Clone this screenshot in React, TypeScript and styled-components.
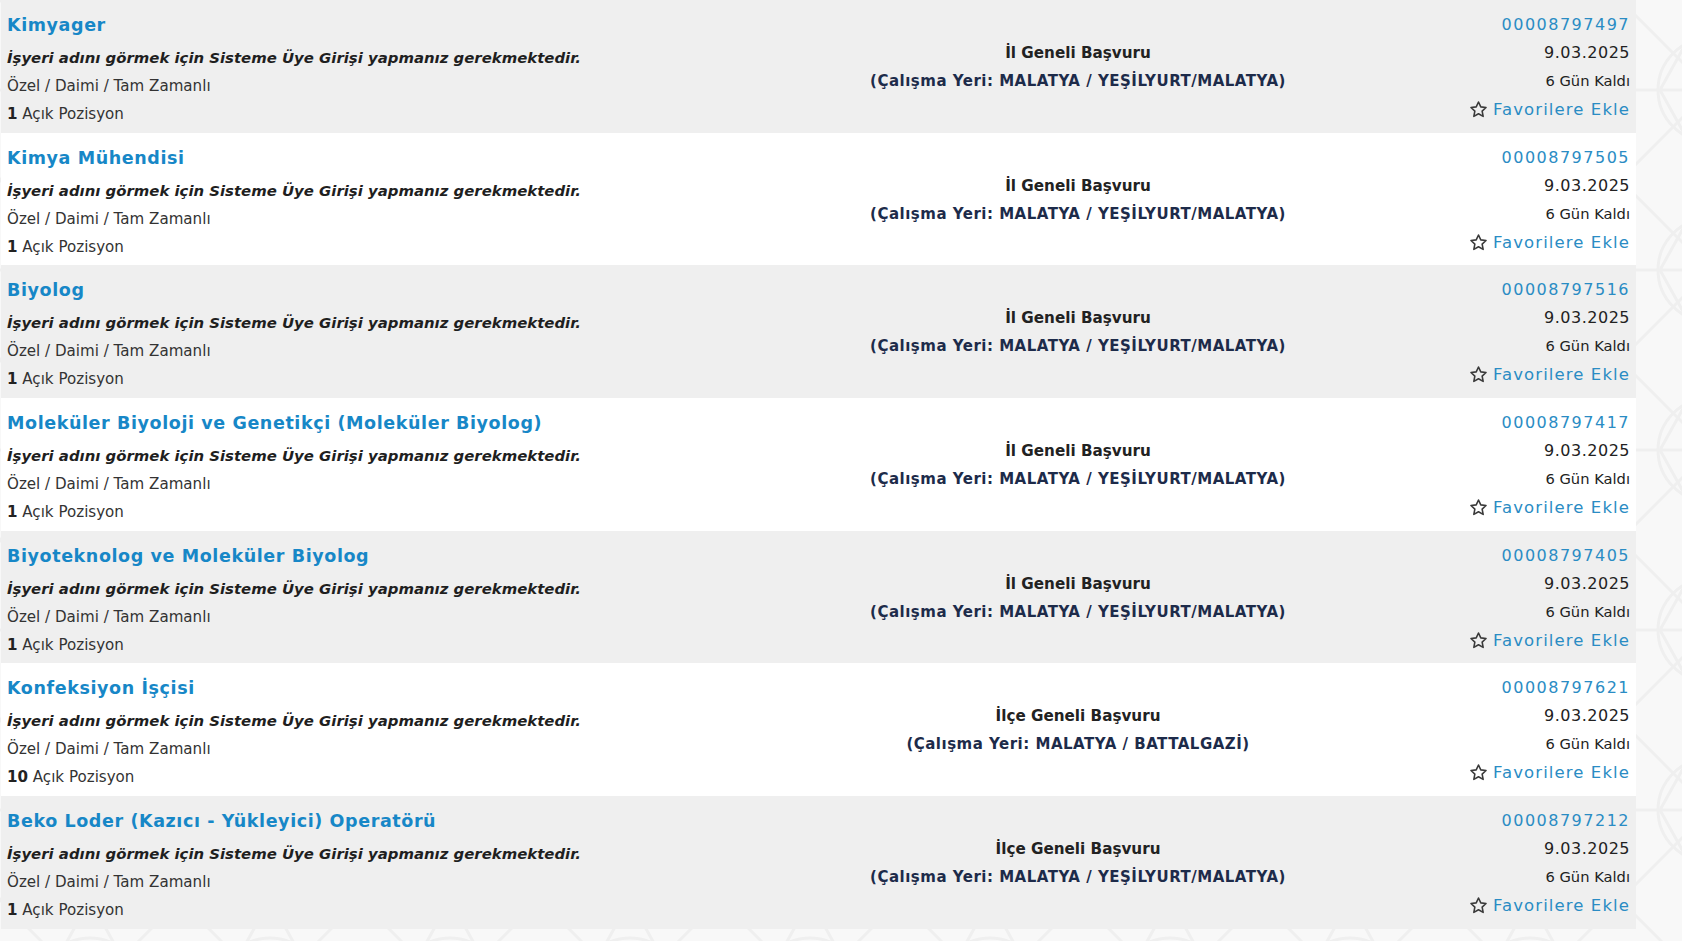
import React from 'react';
import styled, { createGlobalStyle } from 'styled-components';

const GlobalStyle = createGlobalStyle`
  html, body {
    margin: 0;
    padding: 0;
  }

  body {
    font-family: 'DejaVu Sans', Verdana, sans-serif;
    background-color: #f8f8f8;
    background-image: url("data:image/svg+xml,%3Csvg xmlns='http://www.w3.org/2000/svg' width='180' height='180' viewBox='0 0 180 180'%3E%3Cg fill='none' stroke='%23efefef' stroke-width='3'%3E%3Ccircle cx='90' cy='90' r='52'/%3E%3Cpath d='M90 0 L140 90 L90 180 L40 90 Z'/%3E%3Cpath d='M0 90 L180 90 M0 0 L180 180 M180 0 L0 180'/%3E%3C/g%3E%3C/svg%3E");
  }
`;

const Page = styled.div`
  min-height: 941px;
  padding-left: 1px;
`;

const List = styled.div`
  display: flex;
  flex-direction: column;
  width: 1635px;
`;

const Row = styled.div<{ $striped: boolean }>`
  display: grid;
  grid-template-columns: 819px 504px 1fr;
  box-sizing: border-box;
  height: 132.7px;
  padding: 11px 6px 0 6px;
  background-color: ${({ $striped }) => ($striped ? '#efefef' : '#ffffff')};
`;

const Left = styled.div`
  display: flex;
  flex-direction: column;
`;

const Title = styled.a`
  display: block;
  height: 28px;
  margin-bottom: 5px;
  line-height: 28px;
  font-size: 17.5px;
  font-weight: bold;
  letter-spacing: 0.6px;
  color: #1787c7;
  text-decoration: none;
  white-space: nowrap;
`;

const Notice = styled.div`
  line-height: 28px;
  font-size: 14.9px;
  font-weight: bold;
  font-style: italic;
  color: #1f1f1f;
  white-space: nowrap;
`;

const Meta = styled.div`
  line-height: 28px;
  font-size: 15.1px;
  color: #333;
  white-space: nowrap;

  b {
    color: #222;
  }
`;

const Middle = styled.div`
  display: flex;
  flex-direction: column;
  align-items: center;
  padding-top: 28px;
`;

const ApplyType = styled.div`
  line-height: 28px;
  font-size: 15.2px;
  font-weight: bold;
  color: #222;
  white-space: nowrap;
`;

const Place = styled.div`
  line-height: 28px;
  font-size: 15px;
  font-weight: bold;
  letter-spacing: 0.5px;
  color: #1d2b4a;
  white-space: nowrap;
`;

const Right = styled.div`
  display: flex;
  flex-direction: column;
  align-items: flex-end;
`;

const Number = styled.a`
  line-height: 28px;
  font-size: 16px;
  letter-spacing: 1.5px;
  color: #2a8cc4;
  text-decoration: none;
`;

const DateText = styled.div`
  line-height: 28px;
  font-size: 16px;
  letter-spacing: 0.5px;
  color: #222;
`;

const Remaining = styled.div`
  line-height: 28px;
  font-size: 14.7px;
  color: #222;
`;

const FavButton = styled.a`
  display: flex;
  align-items: center;
  gap: 5px;
  height: 29px;
  font-size: 16.5px;
  letter-spacing: 1.1px;
  color: #2a8cc4;
  text-decoration: none;
  cursor: pointer;
`;

const StarIcon = () => (
  <svg width="19" height="19" viewBox="0 0 24 24" fill="none" stroke="#3a3a3a" strokeWidth="2" strokeLinejoin="round">
    <path d="M12 2.5l2.9 6.2 6.6.8-4.9 4.6 1.3 6.6L12 17.4l-5.9 3.3 1.3-6.6-4.9-4.6 6.6-.8z" />
  </svg>
);

interface Job {
  title: string;
  id: string;
  scope: string;
  place: string;
  positions: number;
}

const jobs: Job[] = [
  { title: 'Kimyager', id: '00008797497', scope: 'İl Geneli Başvuru', place: 'MALATYA / YEŞİLYURT/MALATYA', positions: 1 },
  { title: 'Kimya Mühendisi', id: '00008797505', scope: 'İl Geneli Başvuru', place: 'MALATYA / YEŞİLYURT/MALATYA', positions: 1 },
  { title: 'Biyolog', id: '00008797516', scope: 'İl Geneli Başvuru', place: 'MALATYA / YEŞİLYURT/MALATYA', positions: 1 },
  {
    title: 'Moleküler Biyoloji ve Genetikçi (Moleküler Biyolog)',
    id: '00008797417',
    scope: 'İl Geneli Başvuru',
    place: 'MALATYA / YEŞİLYURT/MALATYA',
    positions: 1,
  },
  { title: 'Biyoteknolog ve Moleküler Biyolog', id: '00008797405', scope: 'İl Geneli Başvuru', place: 'MALATYA / YEŞİLYURT/MALATYA', positions: 1 },
  { title: 'Konfeksiyon İşçisi', id: '00008797621', scope: 'İlçe Geneli Başvuru', place: 'MALATYA / BATTALGAZİ', positions: 10 },
  {
    title: 'Beko Loder (Kazıcı - Yükleyici) Operatörü',
    id: '00008797212',
    scope: 'İlçe Geneli Başvuru',
    place: 'MALATYA / YEŞİLYURT/MALATYA',
    positions: 1,
  },
];

const App: React.FC = () => {
  return (
    <>
      <GlobalStyle />
      <Page>
        <List>
          {jobs.map((job, index) => (
            <Row key={job.id} $striped={index % 2 === 0}>
              <Left>
                <Title href="#">{job.title}</Title>
                <Notice>İşyeri adını görmek için Sisteme Üye Girişi yapmanız gerekmektedir.</Notice>
                <Meta>Özel / Daimi / Tam Zamanlı</Meta>
                <Meta>
                  <b>{job.positions}</b> Açık Pozisyon
                </Meta>
              </Left>
              <Middle>
                <ApplyType>{job.scope}</ApplyType>
                <Place>(Çalışma Yeri: {job.place})</Place>
              </Middle>
              <Right>
                <Number href="#">{job.id}</Number>
                <DateText>9.03.2025</DateText>
                <Remaining>6 Gün Kaldı</Remaining>
                <FavButton>
                  <StarIcon />
                  Favorilere Ekle
                </FavButton>
              </Right>
            </Row>
          ))}
        </List>
      </Page>
    </>
  );
};

export default App;
